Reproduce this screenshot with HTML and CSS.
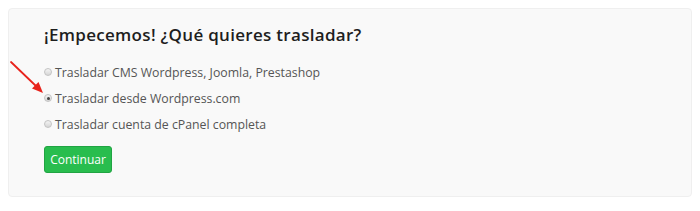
FILE: index.html
```html
<!DOCTYPE html>
<html lang="es">
<head>
<meta charset="utf-8">
<link rel="stylesheet" href="styles.css">
</head>
<body>
<div class="card">
  <h2 class="title">¡Empecemos! ¿Qué quieres trasladar?</h2>
  <ul class="options">
    <li class="option"><span class="radio"></span><span class="label">Trasladar CMS Wordpress, Joomla, Prestashop</span></li>
    <li class="option"><span class="radio checked"></span><span class="label">Trasladar desde Wordpress.com</span></li>
    <li class="option"><span class="radio"></span><span class="label">Trasladar cuenta de cPanel completa</span></li>
  </ul>
  <button class="btn">Continuar</button>
</div>
<svg class="arrow" width="50" height="50" viewBox="0 0 50 50">
  <line x1="11" y1="12" x2="37" y2="37" stroke="#e8231c" stroke-width="1.8" stroke-linecap="round"/>
  <polygon points="43,43 32,38.5 38.5,32" fill="#e8231c"/>
</svg>
</body>
</html>
```
FILE: styles.css
```css
html, body { margin: 0; padding: 0; background: #fff; }
body { padding: 8px; position: relative; width: 700px; height: 211px; box-sizing: border-box; }
.card {
  width: 684px; height: 189px; box-sizing: border-box;
  background: #f9f9f9; border: 1px solid #efefef; border-radius: 4px;
  padding: 14px 35px 0;
}
.title {
  margin: 0; font-family: "Open Sans", sans-serif; font-weight: 600; font-size: 17px;
  letter-spacing: 0.3px; color: #1e1e1e; line-height: 24px;
}
.options { list-style: none; margin: 12px 0 0; padding: 0; }
.option { display: flex; align-items: center; height: 26px;
  font-family: "Open Sans", sans-serif; font-size: 12.3px; color: #555; }
.radio {
  width: 6px; height: 6px; border-radius: 50%; border: 1px solid #c4c4c4;
  background: linear-gradient(#f4f4f4, #d6d6d6); margin-right: 3px; flex: none;
  display: flex; align-items: center; justify-content: center;
}
.radio.checked::after { content: ""; width: 3px; height: 3px; border-radius: 50%; background: #444; }
.btn {
  margin-top: 9px; width: 68px; height: 27px; border: 1px solid #21a443; border-radius: 3px;
  background: #29bd4e; color: #fff; font-family: "Open Sans", sans-serif; font-size: 12px;
  padding: 0; cursor: pointer;
}
.arrow { position: absolute; left: 0; top: 50px; overflow: visible; }
```
